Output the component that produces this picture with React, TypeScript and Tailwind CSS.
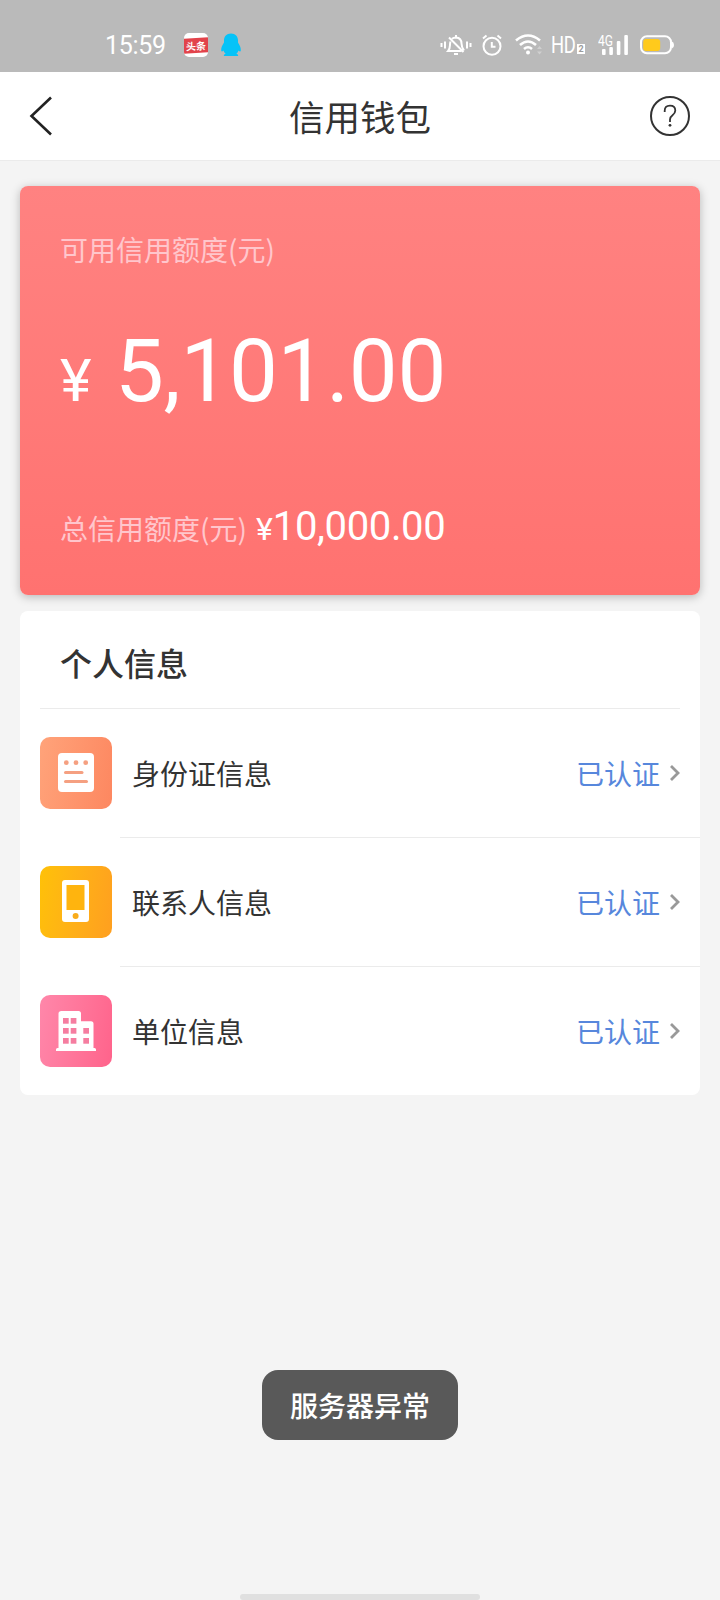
import React from "react";

interface InfoItem {
  label: string;
  status: string;
  tile: string;
  icon: React.ReactNode;
}

function IdCardIcon() {
  return (
    <svg width="72" height="72" viewBox="0 0 72 72">
      <rect x="18" y="16" width="36" height="39" rx="4" fill="#fff" />
      <g fill="#f5a081">
        <circle cx="26.3" cy="25.7" r="2.4" />
        <circle cx="36" cy="25.7" r="2.4" />
        <circle cx="45.7" cy="25.7" r="2.4" />
        <rect x="24" y="34" width="19.5" height="3" rx="1.5" />
        <rect x="24" y="43" width="24" height="3" rx="1.5" />
      </g>
    </svg>
  );
}

function PhoneIcon() {
  return (
    <svg width="72" height="72" viewBox="0 0 72 72">
      <rect x="22" y="14" width="27" height="42" rx="3" fill="#fff" />
      <rect x="26.5" y="19" width="18" height="25" fill="#ffb40e" />
      <circle cx="35.6" cy="50" r="3" fill="#f9ac1b" />
    </svg>
  );
}

function BuildingIcon() {
  const windows = [
    [23, 23], [30.7, 23],
    [23, 33], [30.7, 33], [43.3, 33],
    [23, 43], [30.7, 43], [43.3, 43],
  ];
  return (
    <svg width="72" height="72" viewBox="0 0 72 72">
      <path
        d="M21.500 16H38.500Q41 16 41 18.500V26.300H51Q53.500 26.300 53.500 28.800V53H54.500Q56 53 56 54.500V56H16V54.500Q16 53 17.500 53H18.500V18.500Q18.500 16 21.500 16Z"
        fill="#fff"
      />
      {windows.map(([x, y]) => (
        <rect key={`${x}-${y}`} x={x} y={y} width="5.700" height="5.700" fill="#f57da0" />
      ))}
    </svg>
  );
}

const items: InfoItem[] = [
  {
    label: "身份证信息",
    status: "已认证",
    tile: "bg-linear-100 from-[#ffa37a] to-[#fd8760]",
    icon: <IdCardIcon />,
  },
  {
    label: "联系人信息",
    status: "已认证",
    tile: "bg-linear-100 from-[#ffc107] to-[#ff9f1f]",
    icon: <PhoneIcon />,
  },
  {
    label: "单位信息",
    status: "已认证",
    tile: "bg-linear-100 from-[#ff87aa] to-[#ff638b]",
    icon: <BuildingIcon />,
  },
];

function StatusBar() {
  return (
    <div className="flex h-[72px] items-center bg-[#bababa] pt-[18px] pl-[105px] text-white">
      <span className="w-[79px] pt-[2px] font-['Roboto'] text-[25px] leading-[36px] tracking-[-0.3px]">
        15:59
      </span>
      {/* Notification icons */}
      <div className="flex h-6 w-6 items-center overflow-hidden rounded-[5px] bg-white">
        <div className="flex h-[15px] w-6 -skew-y-3 items-center justify-center bg-[#e2434b] text-[10px] leading-none font-bold">
          头条
        </div>
      </div>
      <svg className="ml-[13px]" width="20" height="24" viewBox="0 0 20 24" fill="#06c3f8">
        <path d="M10 .5C5.500.5 3 3.500 3 7.500V9.500C1.500 12 0 14.500.2 17.500.4 19 1.500 18.600 2.500 17.500 2.800 18.800 3.500 19.900 4.600 20.700 3 21.200 2.500 22 3 23H17C17.500 22 17 21.200 15.400 20.700 16.500 19.900 17.200 18.800 17.500 17.500 18.500 18.600 19.600 19 19.800 17.500 20 14.500 18.500 12 17 9.500V7.500C17 3.500 14.500.5 10 .5Z" />
      </svg>

      {/* System icons */}
      <svg className="ml-[199px]" width="32" height="22" viewBox="0 0 32 22" fill="none" stroke="#fff" strokeWidth="2">
        <path d="M1.500 9V13M5 7.500V14.500M27 7.500V14.500M30.500 9V13" />
        <path d="M12 4.700Q13.500 3.400 16 3.400 21.500 3.700 21.500 9.500 21.500 13 24 16.500M10.500 7.500Q10 9 10 11 10 14.500 8 17H21.500M9 3.500L23.500 18" />
        <path d="M16 1V3M14 20H18" />
      </svg>
      <svg className="ml-[10px]" width="20" height="22" viewBox="0 0 20 22" fill="none" stroke="#fff" strokeWidth="2">
        <circle cx="10" cy="12.200" r="8.500" />
        <path d="M9.800 8V12.800H13.500" />
        <path d="M1 4.500L4.500 1.500M15.500 1.500L19 4.500" />
      </svg>
      <svg className="ml-[13px]" width="28" height="22" viewBox="0 0 28 22" fill="none" stroke="#fff" strokeWidth="2.600">
        <path d="M1 6.500Q13 -3.500 25 6.500M5 11Q13 4 21 11M9 15Q13 11.500 17 15" />
        <circle cx="13" cy="18.600" r="2" fill="#fff" stroke="none" />
        <path d="M22 15L24.500 12 27 15ZM22 17.500L24.500 20.500 27 17.500Z" fill="#d0d0d0" stroke="none" />
      </svg>
      <div className="ml-[8px] flex h-[22px] w-[36px] items-end">
        <span className="w-[26px] shrink-0 origin-left scale-x-80 font-['Roboto'] text-[23px] leading-[20px] tracking-[-0.5px]">
          HD
        </span>
        <span className="mb-[2px] flex h-[10px] w-2 shrink-0 items-center justify-center bg-white font-['Roboto'] text-[9px] leading-none font-bold text-[#9b9b9b]">
          2
        </span>
      </div>
      <svg className="ml-[11px]" width="31" height="22" viewBox="0 0 31 22" fill="#fff">
        <text x="0" y="12" fontSize="14" fontFamily="Roboto" textLength="15" lengthAdjust="spacingAndGlyphs">4G</text>
        <rect x="4" y="15" width="3.600" height="6" rx="1" />
        <rect x="11.300" y="13" width="3.600" height="8" rx="1" />
        <rect x="18.800" y="7" width="3.600" height="14" rx="1" />
        <rect x="26.300" y="1" width="3.600" height="20" rx="1" />
      </svg>
      <svg className="ml-[11px]" width="35" height="20" viewBox="0 0 35 20" fill="none">
        <rect x="1" y="1.200" width="30" height="17" rx="6" stroke="#fff" strokeWidth="2" />
        <path d="M32 6.500Q34 7 34 10 34 13 32 13.500Z" fill="#fff" />
        <rect x="3.200" y="4" width="17" height="12" rx="3" fill="#ffca1c" />
      </svg>
    </div>
  );
}

function Header() {
  return (
    <header className="flex h-[89px] items-center justify-between border-b border-[#ebebeb] bg-white pr-[30px] pl-[29px]">
      <svg width="41" height="40" viewBox="0 0 41 40" fill="none" stroke="#222" strokeWidth="2.600">
        <path d="M22 1.500L2.500 20 22 38.500" />
      </svg>
      <h1 className="text-[35.500px] leading-[40px] text-[#333]">信用钱包</h1>
      <svg width="40" height="40" viewBox="0 0 40 40" fill="none" stroke="#333">
        <circle cx="20" cy="20" r="19" strokeWidth="2" />
        <path d="M14.700 16V14.800Q14.700 9.700 20 9.700 25.300 9.700 25.300 14.500 25.300 17 22.500 19.200 20 21 20 23.500V26" strokeWidth="1.800" />
        <circle cx="20" cy="29.300" r="1.400" fill="#333" stroke="none" />
      </svg>
    </header>
  );
}

function CreditCard() {
  return (
    <section className="mt-[25px] flex h-[409px] flex-col rounded-lg bg-linear-to-b from-[#ff8281] to-[#ff7270] px-10 pt-[43px] text-white shadow-[0_2px_10px_rgba(0,0,0,0.25)]">
      <p className="text-[28px] leading-[40px] text-[#ffc6cc]">可用信用额度(元)</p>
      <div className="mt-[50px] flex items-baseline font-['Roboto'] leading-[104px]">
        <span className="w-[55px] text-[60px]">¥</span>
        <span className="text-[87px] tracking-[-0.3px]">5,101.00</span>
      </div>
      <div className="mt-[70px] flex items-baseline leading-[48px]">
        <span className="text-[28px] text-[#ffc6cc]">总信用额度(元)</span>
        <span className="ml-[9px] font-['Roboto'] text-[32px]">¥</span>
        <span className="font-['Roboto'] text-[40px] tracking-[-0.350px]">10,000.00</span>
      </div>
    </section>
  );
}

function InfoRow({ item, last }: { item: InfoItem; last: boolean }) {
  return (
    <div className="flex h-[129px] pl-5">
      <div className={`mt-7 h-[72px] w-[72px] shrink-0 overflow-hidden rounded-[10px] ${item.tile}`}>
        {item.icon}
      </div>
      <div className={`ml-2 flex flex-1 items-center border-b pr-5 pl-3 ${last ? "border-transparent" : "border-[#ebebeb]"}`}>
        <span className="flex-1 text-[28px] leading-[40px] text-[#333]">{item.label}</span>
        <span className="text-[28px] leading-[40px] text-[#5787dc]">{item.status}</span>
        <svg className="ml-[9px]" width="11" height="18" viewBox="0 0 11 18" fill="none" stroke="#999" strokeWidth="2.800">
          <path d="M2 2L9 9 2 16" />
        </svg>
      </div>
    </div>
  );
}

export default function App() {
  return (
    <div className="flex h-[1600px] w-[720px] flex-col overflow-hidden bg-[#f4f4f4] font-['Noto_Sans_CJK_SC',sans-serif]">
      <StatusBar />
      <Header />
      <main className="px-5">
        <CreditCard />
        <section className="mt-4 h-[484px] rounded-lg bg-white">
          <div className="mx-5 flex h-[98px] items-center border-b border-[#ebebeb] px-5 pt-[4px]">
            <h2 className="text-[32px] leading-[44px] font-medium text-[#333]">个人信息</h2>
          </div>
          {items.map((item, index) => (
            <InfoRow key={item.label} item={item} last={index === items.length - 1} />
          ))}
        </section>
      </main>

      {/* Toast */}
      <div className="mt-[275px] flex h-[70px] w-[196px] items-center justify-center self-center rounded-2xl bg-[#595959] text-[28px] font-medium text-white">
        服务器异常
      </div>

      {/* Gesture bar */}
      <div className="mt-auto h-[6px] w-[240px] self-center rounded-full bg-[#e0e0e0]" />
    </div>
  );
}
